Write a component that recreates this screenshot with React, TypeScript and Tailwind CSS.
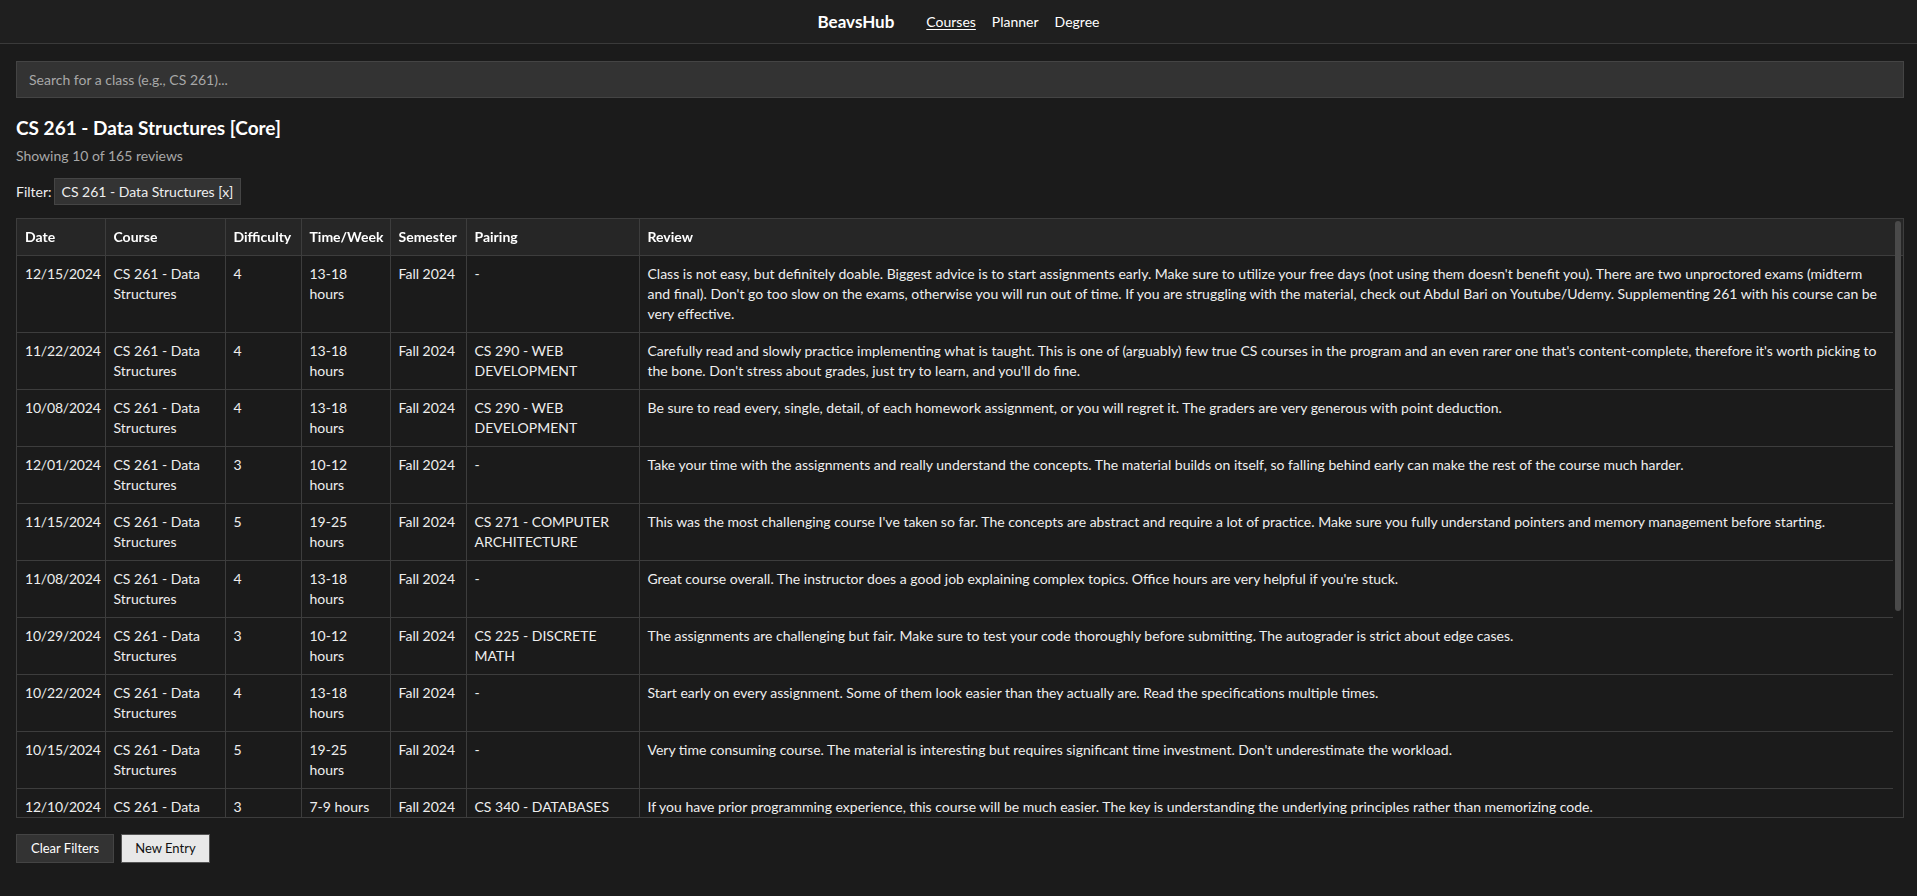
import { useState } from 'react';

interface Review {
    date: string;
    course: string;
    difficulty: number;
    time: string;
    semester: string;
    pairing: string;
    text: string;
}

const reviews: Review[] = [
    {
        date: '12/15/2024',
        course: 'CS 261 - Data Structures',
        difficulty: 4,
        time: '13-18 hours',
        semester: 'Fall 2024',
        pairing: '-',
        text: "Class is not easy, but definitely doable. Biggest advice is to start assignments early. Make sure to utilize your free days (not using them doesn't benefit you). There are two unproctored exams (midterm and final). Don't go too slow on the exams, otherwise you will run out of time. If you are struggling with the material, check out Abdul Bari on Youtube/Udemy. Supplementing 261 with his course can be very effective.",
    },
    {
        date: '11/22/2024',
        course: 'CS 261 - Data Structures',
        difficulty: 4,
        time: '13-18 hours',
        semester: 'Fall 2024',
        pairing: 'CS 290 - WEB DEVELOPMENT',
        text: "Carefully read and slowly practice implementing what is taught. This is one of (arguably) few true CS courses in the program and an even rarer one that's content-complete, therefore it's worth picking to the bone. Don't stress about grades, just try to learn, and you'll do fine.",
    },
    {
        date: '10/08/2024',
        course: 'CS 261 - Data Structures',
        difficulty: 4,
        time: '13-18 hours',
        semester: 'Fall 2024',
        pairing: 'CS 290 - WEB DEVELOPMENT',
        text: 'Be sure to read every, single, detail, of each homework assignment, or you will regret it. The graders are very generous with point deduction.',
    },
    {
        date: '12/01/2024',
        course: 'CS 261 - Data Structures',
        difficulty: 3,
        time: '10-12 hours',
        semester: 'Fall 2024',
        pairing: '-',
        text: 'Take your time with the assignments and really understand the concepts. The material builds on itself, so falling behind early can make the rest of the course much harder.',
    },
    {
        date: '11/15/2024',
        course: 'CS 261 - Data Structures',
        difficulty: 5,
        time: '19-25 hours',
        semester: 'Fall 2024',
        pairing: 'CS 271 - COMPUTER ARCHITECTURE',
        text: "This was the most challenging course I've taken so far. The concepts are abstract and require a lot of practice. Make sure you fully understand pointers and memory management before starting.",
    },
    {
        date: '11/08/2024',
        course: 'CS 261 - Data Structures',
        difficulty: 4,
        time: '13-18 hours',
        semester: 'Fall 2024',
        pairing: '-',
        text: "Great course overall. The instructor does a good job explaining complex topics. Office hours are very helpful if you're stuck.",
    },
    {
        date: '10/29/2024',
        course: 'CS 261 - Data Structures',
        difficulty: 3,
        time: '10-12 hours',
        semester: 'Fall 2024',
        pairing: 'CS 225 - DISCRETE MATH',
        text: 'The assignments are challenging but fair. Make sure to test your code thoroughly before submitting. The autograder is strict about edge cases.',
    },
    {
        date: '10/22/2024',
        course: 'CS 261 - Data Structures',
        difficulty: 4,
        time: '13-18 hours',
        semester: 'Fall 2024',
        pairing: '-',
        text: 'Start early on every assignment. Some of them look easier than they actually are. Read the specifications multiple times.',
    },
    {
        date: '10/15/2024',
        course: 'CS 261 - Data Structures',
        difficulty: 5,
        time: '19-25 hours',
        semester: 'Fall 2024',
        pairing: '-',
        text: "Very time consuming course. The material is interesting but requires significant time investment. Don't underestimate the workload.",
    },
    {
        date: '12/10/2024',
        course: 'CS 261 - Data Structures',
        difficulty: 3,
        time: '7-9 hours',
        semester: 'Fall 2024',
        pairing: 'CS 340 - DATABASES',
        text: 'If you have prior programming experience, this course will be much easier. The key is understanding the underlying principles rather than memorizing code.',
    },
];

const headers = ['Date', 'Course', 'Difficulty', 'Time/Week', 'Semester', 'Pairing', 'Review'];

export default function App() {
    const [query, setQuery] = useState('');

    return (
        <div className="min-h-screen bg-[#1b1b1b] text-[#eeeeee] font-['Lato','Noto_Sans',sans-serif] text-[14px]">
            {/* Top nav */}
            <header className="h-[44px] bg-[#1f1f1f] border-b border-[#3a3a3a] flex items-center justify-center">
                <span className="text-[17px] font-bold text-white mr-[32px]">BeavsHub</span>
                <nav className="flex items-center gap-[16px] text-[14px]">
                    <a href="#" className="underline underline-offset-2 text-white">Courses</a>
                    <a href="#" className="text-white">Planner</a>
                    <a href="#" className="text-white">Degree</a>
                </nav>
            </header>

            <main className="pl-4 pr-[13px] pt-[17px]">
                <input
                    value={query}
                    onChange={(e) => setQuery(e.target.value)}
                    placeholder="Search for a class (e.g., CS 261)..."
                    className="w-full h-[37px] px-3 bg-[#333333] border border-[#444444] text-[14px] text-white placeholder:text-[#a8a8a8] outline-none"
                />

                <h2 className="mt-[18px] text-[19px] leading-6 font-bold text-white">CS 261 - Data Structures [Core]</h2>
                <p className="mt-[6px] text-[14px] leading-5 text-[#a8a8a8]">Showing 10 of 165 reviews</p>

                <div className="mt-3 flex items-center gap-[2px] text-[14px]">
                    <span>Filter:</span>
                    <span className="h-[27px] px-[7px] flex items-center bg-[#333333] border border-[#454545]">CS 261 - Data Structures [x]</span>
                </div>

                {/* Reviews table with its scrollbar track */}
                <div className="mt-[13px] h-[600px] flex border border-[#3d3d3d]">
                    <div className="flex-1 overflow-y-auto [scrollbar-width:none]">
                        <table className="w-full table-fixed border-collapse text-left leading-5">
                            <colgroup>
                                <col className="w-[88px]" />
                                <col className="w-[120px]" />
                                <col className="w-[76px]" />
                                <col className="w-[89px]" />
                                <col className="w-[76px]" />
                                <col className="w-[173px]" />
                                <col />
                            </colgroup>
                            <thead className="sticky top-0 bg-[#262626]">
                                <tr>
                                    {headers.map((h) => (
                                        <th key={h} className="px-2 py-2 font-bold text-white border-b border-r border-[#3d3d3d] last:border-r-0 whitespace-nowrap">
                                            {h}
                                        </th>
                                    ))}
                                </tr>
                            </thead>
                            <tbody>
                                {reviews.map((r, i) => (
                                    <tr key={i} className="align-top">
                                        <td className="px-2 py-2 border-b border-r border-[#3d3d3d] tracking-[-0.2px]">{r.date}</td>
                                        <td className="px-2 py-2 border-b border-r border-[#3d3d3d]">{r.course}</td>
                                        <td className="px-2 py-2 border-b border-r border-[#3d3d3d]">{r.difficulty}</td>
                                        <td className="px-2 py-2 border-b border-r border-[#3d3d3d]">{r.time}</td>
                                        <td className="px-2 py-2 border-b border-r border-[#3d3d3d]">{r.semester}</td>
                                        <td className="px-2 py-2 border-b border-r border-[#3d3d3d]">{r.pairing}</td>
                                        <td className="px-2 py-2 border-b border-[#3d3d3d]">{r.text}</td>
                                    </tr>
                                ))}
                            </tbody>
                        </table>
                        <div className="h-[260px]" />
                    </div>
                    <div className="relative w-[10px] shrink-0">
                        <div className="h-[37px] bg-[#262626] border-b border-[#3d3d3d]" />
                        <div className="absolute left-[2px] top-[2px] w-[6px] h-[390px] rounded-full bg-[#4a4a4a]" />
                    </div>
                </div>

                <div className="mt-4 flex gap-[7px] text-[13px]">
                    <button className="h-[29px] px-[14px] bg-[#333333] border border-[#444444] text-white">Clear Filters</button>
                    <button className="h-[29px] px-[13px] bg-[#e8e8e8] border border-[#555555] text-[#111111]">New Entry</button>
                </div>
            </main>
        </div>
    );
}
